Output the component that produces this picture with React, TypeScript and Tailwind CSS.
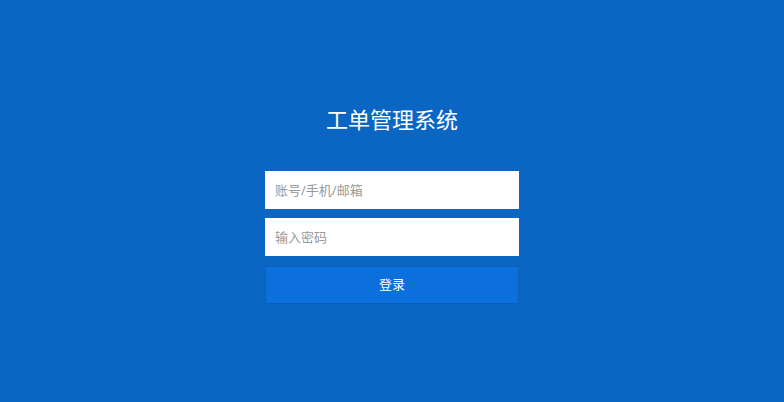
import { useState } from "react";

export default function App() {
  const [account, setAccount] = useState("");
  const [password, setPassword] = useState("");

  return (
    <div className="flex h-[402px] w-full flex-col items-center bg-[#0b66c3] font-['Noto_Sans','Noto_Sans_CJK_SC',sans-serif]">
      <h1 className="mt-[102px] text-[22px] leading-[34px] text-white">工单管理系统</h1>
      <form className="mt-[35px] flex w-[254px] flex-col gap-[9px]" onSubmit={(e) => e.preventDefault()}>
        <input
          className="h-[38px] w-full bg-white px-[10px] text-[13px] text-gray-700 outline-none placeholder:text-[#9a9a9a]"
          placeholder="账号/手机/邮箱"
          value={account}
          onChange={(e) => setAccount(e.target.value)}
        />
        <input
          type="password"
          className="h-[38px] w-full bg-white px-[10px] text-[13px] text-gray-700 outline-none placeholder:text-[#9a9a9a]"
          placeholder="输入密码"
          value={password}
          onChange={(e) => setPassword(e.target.value)}
        />
        <button
          type="submit"
          className="mt-px h-[38px] w-full border border-[#0a5fb8] bg-[#0b6fdd] text-[13px] text-white"
        >
          登录
        </button>
      </form>
    </div>
  );
}
